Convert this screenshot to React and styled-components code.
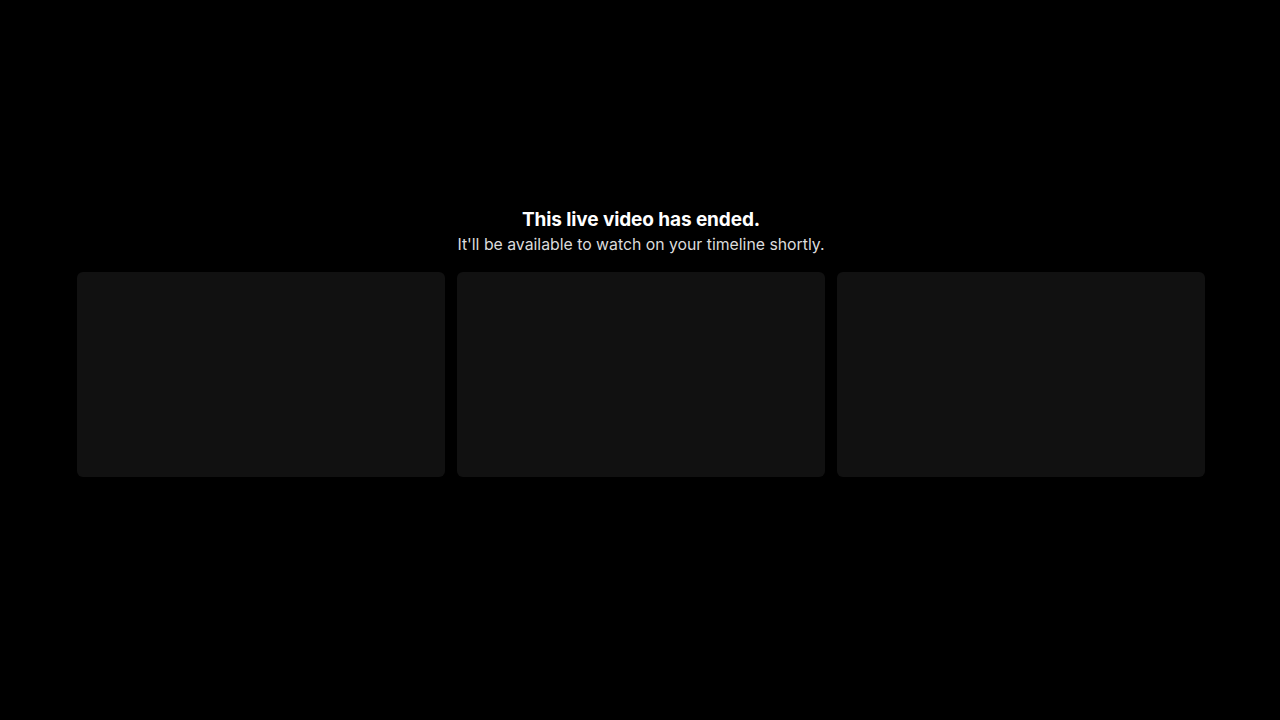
import React from "react";
import styled, { createGlobalStyle } from "styled-components";

const Global = createGlobalStyle`
  html, body { margin: 0; padding: 0; background: #000; }
  body { font-family: Inter, "Noto Sans", sans-serif; }
`;

const Page = styled.div`
  width: 1280px;
  height: 720px;
  background: #000;
  display: flex;
  flex-direction: column;
  align-items: center;
  padding: 208px 0 0 2px;
  box-sizing: border-box;
`;

const Title = styled.h1`
  margin: 0;
  font-size: 19px;
  line-height: 24px;
  font-weight: 700;
  letter-spacing: -0.1px;
  color: #fff;
`;

const Subtitle = styled.p`
  margin: 3px 0 0;
  font-size: 15.8px;
  line-height: 20px;
  font-weight: 400;
  color: #dcdcdc;
`;

const Grid = styled.div`
  margin-top: 17px;
  display: grid;
  grid-template-columns: repeat(3, 368px);
  gap: 12px;
`;

const Card = styled.div`
  height: 205px;
  background: #111111;
  border-radius: 6px;
`;

export default function App() {
  return (
    <>
      <Global />
      <Page>
        <Title>This live video has ended.</Title>
        <Subtitle>It'll be available to watch on your timeline shortly.</Subtitle>
        <Grid>
          <Card />
          <Card />
          <Card />
        </Grid>
      </Page>
    </>
  );
}
